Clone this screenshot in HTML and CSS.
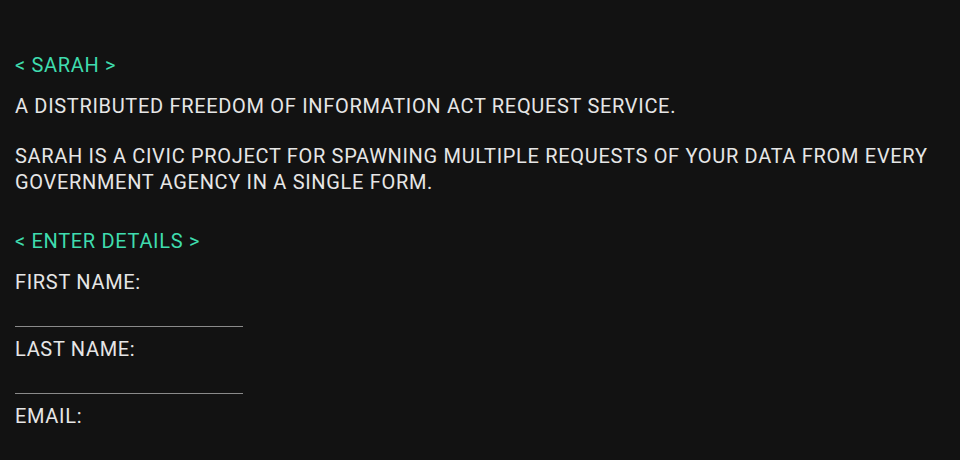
FILE: index.html
```html
<!DOCTYPE html>
<html lang="en">
  <head>
    <meta charset="UTF-8" />
    <meta name="viewport" content="width=device-width, initial-scale=1.0" />
    <title>Sarah</title>
    <link rel="stylesheet" href="styles.css">
  </head>
  <body>
    <div class="page">
      <h2 class="heading">&lt; SARAH &gt;</h2>
      <p class="intro">A DISTRIBUTED FREEDOM OF INFORMATION ACT REQUEST SERVICE.</p>
      <p class="intro">
        SARAH IS A CIVIC PROJECT FOR SPAWNING MULTIPLE REQUESTS OF YOUR DATA FROM EVERY
        GOVERNMENT AGENCY IN A SINGLE FORM.
      </p>

      <h2 class="heading details">&lt; ENTER DETAILS &gt;</h2>
      <form class="details-form">
        <label for="firstName">FIRST NAME:</label>
        <input id="firstName" type="text" />
        <label for="lastName">LAST NAME:</label>
        <input id="lastName" type="text" />
        <label for="email">EMAIL:</label>
        <input id="email" type="email" />
      </form>
    </div>
  </body>
</html>
```

FILE: styles.css
```css
/* General Styles */
body {
  margin: 0;
  padding: 0;
  background: #121212;
  color: #e6e6e6;
  font-family: "Roboto", "DejaVu Sans", sans-serif;
  font-size: 20px;
  letter-spacing: 0.68px;
  overflow: hidden;
}

.page {
  padding: 52px 15px 0 15px;
}

/* Headings */
.heading {
  margin: 0 0 15px 0;
  font-size: 20px;
  font-weight: normal;
  line-height: 26px;
  color: #3fdcae;
}

.heading.details {
  margin-top: 33px;
  margin-bottom: 15px;
}

/* Paragraphs */
.intro {
  margin: 0 0 24px 0;
  line-height: 26px;
}

/* Form */
.details-form {
  display: flex;
  flex-direction: column;
  align-items: flex-start;
}

label {
  display: block;
  line-height: 26px;
}

input {
  width: 228px;
  height: 30px;
  margin: 1px 0 9px 0;
  padding: 0;
  border: none;
  border-bottom: 1.5px solid #8a8a8a;
  background: transparent;
  color: #e6e6e6;
  font-size: 18px;
  outline: none;
}
```
